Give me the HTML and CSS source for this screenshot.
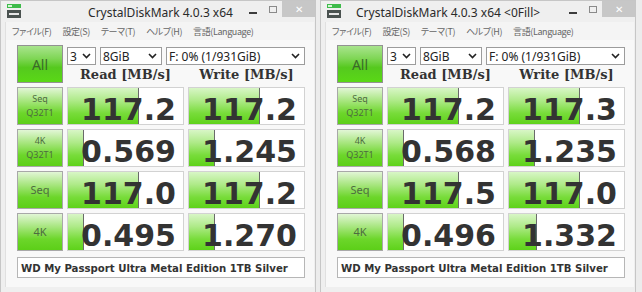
FILE: index.html
```html
<!DOCTYPE html>
<html lang="ja">
<head>
  <meta charset="UTF-8">
  <meta name="viewport" content="width=device-width, initial-scale=1.0">
  <title>CrystalDiskMark 4.0.3 x64</title>
  <link rel="stylesheet" href="styles.css">
</head>
<body>

  <div class="desk">

    <!-- left window: random data -->
    <div class="window">
      <div class="titlebar">
        <svg class="app-icon" width="14" height="14" viewBox="0 0 14 14">
          <rect x="0" y="0" width="14" height="4" fill="#3dbb4a"/>
          <rect x="1" y="1" width="4" height="2" fill="#d6f4d6"/>
          <rect x="0" y="6" width="14" height="8" fill="#4a5250"/>
          <rect x="2" y="9" width="10" height="2" fill="#e6e6e6"/>
        </svg>
        <div class="title">CrystalDiskMark 4.0.3 x64</div>
        <div class="controls">
          <span class="ctl-min"></span>
          <span class="ctl-max"></span>
          <span class="ctl-close">✕</span>
        </div>
      </div>

      <div class="client">
        <div class="menu">
          <span>ファイル(F)</span>
          <span>設定(S)</span>
          <span>テーマ(T)</span>
          <span>ヘルプ(H)</span>
          <span>言語(Language)</span>
        </div>

        <div class="panel">
          <div class="btn btn-all">All</div>
          <div class="top">
            <div class="selects">
              <div class="sel sel-count"><span>3</span><svg width="9" height="6" viewBox="0 0 9 6"><path d="M1 1l3.5 3.5L8 1" fill="none" stroke="#222" stroke-width="1.6"/></svg></div>
              <div class="sel sel-size"><span>8GiB</span><svg width="9" height="6" viewBox="0 0 9 6"><path d="M1 1l3.5 3.5L8 1" fill="none" stroke="#222" stroke-width="1.6"/></svg></div>
              <div class="sel sel-drive"><span>F: 0% (1/931GiB)</span><svg width="9" height="6" viewBox="0 0 9 6"><path d="M1 1l3.5 3.5L8 1" fill="none" stroke="#222" stroke-width="1.6"/></svg></div>
            </div>
            <div class="heads">
              <div>Read [MB/s]</div>
              <div>Write [MB/s]</div>
            </div>
          </div>

          <div class="btn btn-label">Seq<br>Q32T1</div>
          <div class="cell"><div class="bar" style="width: 70px"></div><div class="num">117.2</div></div>
          <div class="cell"><div class="bar" style="width: 70px"></div><div class="num">117.2</div></div>

          <div class="btn btn-label">4K<br>Q32T1</div>
          <div class="cell"><div class="bar" style="width: 15px"></div><div class="num">0.569</div></div>
          <div class="cell"><div class="bar" style="width: 25px"></div><div class="num">1.245</div></div>

          <div class="btn btn-label big">Seq</div>
          <div class="cell"><div class="bar" style="width: 70px"></div><div class="num">117.0</div></div>
          <div class="cell"><div class="bar" style="width: 70px"></div><div class="num">117.2</div></div>

          <div class="btn btn-label big">4K</div>
          <div class="cell"><div class="bar" style="width: 15px"></div><div class="num">0.495</div></div>
          <div class="cell"><div class="bar" style="width: 25px"></div><div class="num">1.270</div></div>

          <div class="comment">WD My Passport Ultra Metal Edition 1TB Silver</div>
        </div>
      </div>
    </div>

    <!-- right window: 0Fill data -->
    <div class="window">
      <div class="titlebar">
        <svg class="app-icon" width="14" height="14" viewBox="0 0 14 14">
          <rect x="0" y="0" width="14" height="4" fill="#3dbb4a"/>
          <rect x="1" y="1" width="4" height="2" fill="#d6f4d6"/>
          <rect x="0" y="6" width="14" height="8" fill="#4a5250"/>
          <rect x="2" y="9" width="10" height="2" fill="#e6e6e6"/>
        </svg>
        <div class="title title-wide">CrystalDiskMark 4.0.3 x64 &lt;0Fill&gt;</div>
        <div class="controls">
          <span class="ctl-min"></span>
          <span class="ctl-max"></span>
          <span class="ctl-close">✕</span>
        </div>
      </div>

      <div class="client">
        <div class="menu">
          <span>ファイル(F)</span>
          <span>設定(S)</span>
          <span>テーマ(T)</span>
          <span>ヘルプ(H)</span>
          <span>言語(Language)</span>
        </div>

        <div class="panel">
          <div class="btn btn-all">All</div>
          <div class="top">
            <div class="selects">
              <div class="sel sel-count"><span>3</span><svg width="9" height="6" viewBox="0 0 9 6"><path d="M1 1l3.5 3.5L8 1" fill="none" stroke="#222" stroke-width="1.6"/></svg></div>
              <div class="sel sel-size"><span>8GiB</span><svg width="9" height="6" viewBox="0 0 9 6"><path d="M1 1l3.5 3.5L8 1" fill="none" stroke="#222" stroke-width="1.6"/></svg></div>
              <div class="sel sel-drive"><span>F: 0% (1/931GiB)</span><svg width="9" height="6" viewBox="0 0 9 6"><path d="M1 1l3.5 3.5L8 1" fill="none" stroke="#222" stroke-width="1.6"/></svg></div>
            </div>
            <div class="heads">
              <div>Read [MB/s]</div>
              <div>Write [MB/s]</div>
            </div>
          </div>

          <div class="btn btn-label">Seq<br>Q32T1</div>
          <div class="cell"><div class="bar" style="width: 70px"></div><div class="num">117.2</div></div>
          <div class="cell"><div class="bar" style="width: 70px"></div><div class="num">117.3</div></div>

          <div class="btn btn-label">4K<br>Q32T1</div>
          <div class="cell"><div class="bar" style="width: 15px"></div><div class="num">0.568</div></div>
          <div class="cell"><div class="bar" style="width: 25px"></div><div class="num">1.235</div></div>

          <div class="btn btn-label big">Seq</div>
          <div class="cell"><div class="bar" style="width: 70px"></div><div class="num">117.5</div></div>
          <div class="cell"><div class="bar" style="width: 70px"></div><div class="num">117.0</div></div>

          <div class="btn btn-label big">4K</div>
          <div class="cell"><div class="bar" style="width: 15px"></div><div class="num">0.496</div></div>
          <div class="cell"><div class="bar" style="width: 27px"></div><div class="num">1.332</div></div>

          <div class="comment">WD My Passport Ultra Metal Edition 1TB Silver</div>
        </div>
      </div>
    </div>

  </div>

</body>
</html>
```

FILE: styles.css
```css
body {
  margin: 0;
  background-color: #ececec;
  font-family: 'Noto Sans', sans-serif;
  color: #333;
}

.desk {
  display: flex;
  gap: 4px;
  width: 642px;
  height: 292px;
}

.window {
  box-sizing: border-box;
  width: 316px;
  height: 292px;
  display: flex;
  flex-direction: column;
  background-color: #efefef;
  border: 1px solid #c6c6c6;
  border-bottom: none;
}

/* title bar */

.titlebar {
  display: flex;
  align-items: flex-start;
  height: 21px;
  flex-shrink: 0;
}

.app-icon {
  margin: 3px 0 0 6px;
  flex-shrink: 0;
}

.title {
  flex: 1;
  text-align: center;
  padding-left: 51px;
  font-size: 12px;
  line-height: 24px;
  color: #2a2a2a;
  white-space: nowrap;
}

.title-wide {
  text-align: left;
  padding-left: 15px;
}

.controls {
  display: flex;
  align-items: flex-start;
  flex-shrink: 0;
}

.ctl-min {
  width: 8px;
  height: 2px;
  margin: 11px 12px 0 0;
  background-color: #3c3c3c;
}

.ctl-max {
  width: 6px;
  height: 5px;
  margin: 5px 5px 0 0;
  border: 1px solid #8a8a8a;
}

.ctl-close {
  width: 33px;
  height: 16px;
  background-color: #c7c7c7;
  color: #fff;
  font-size: 10px;
  line-height: 16px;
  text-align: center;
}

/* client area */

.client {
  flex: 1;
  display: flex;
  flex-direction: column;
  margin: 0 1px 5px 4px;
  background-color: #f8f8f8;
  border-left: 1px solid #e0e0e0;
}

.menu {
  display: flex;
  gap: 11px;
  height: 18px;
  padding-left: 6px;
  font-family: 'Noto Sans CJK JP', sans-serif;
  font-feature-settings: "palt";
  font-size: 9px;
  letter-spacing: -0.4px;
  line-height: 20px;
  color: #666;
  background-color: #f4f4f4;
  white-space: nowrap;
}

.panel {
  display: grid;
  grid-template-columns: 46px 117px 117px;
  grid-template-rows: repeat(5, 38px) 23px;
  column-gap: 4px;
  row-gap: 4px;
  padding: 5px 0 0 11px;
}

.btn {
  box-sizing: border-box;
  border: 1px solid #a8a8a8;
  display: flex;
  align-items: center;
  justify-content: center;
  text-align: center;
}

.btn-all {
  background: linear-gradient(to bottom, #a9e48e 0%, #7fd655 35%, #55c91e 60%, #5ad816 100%);
  border-color: #929292;
  color: #3b6a2a;
  font-size: 14px;
}

.btn-label {
  background: linear-gradient(to bottom, #e2f6d6 0%, #a8e680 35%, #6cd62a 70%, #5ccf18 100%);
  color: #4d6b40;
  font-size: 9px;
  line-height: 14px;
}

.btn-label.big {
  font-size: 11px;
}

.top {
  grid-column: 2 / 4;
  display: flex;
  flex-direction: column;
}

.selects {
  display: flex;
  gap: 4px;
  margin-top: 2px;
}

.sel {
  box-sizing: border-box;
  height: 18px;
  display: flex;
  align-items: center;
  justify-content: space-between;
  padding: 0 4px 0 2px;
  background-color: #fff;
  border: 1px solid #9c9c9c;
  font-size: 12px;
  color: #222;
  white-space: nowrap;
}

.sel-count {
  width: 29px;
}

.sel-size {
  width: 62px;
}

.sel-drive {
  flex: 1;
}

.heads {
  display: grid;
  grid-template-columns: 117px 117px;
  column-gap: 4px;
  margin-top: 2px;
  font-family: 'DejaVu Serif', serif;
  font-weight: bold;
  font-size: 13px;
  line-height: 16px;
  text-align: center;
  color: #333;
}

/* result cells */

.cell {
  box-sizing: border-box;
  display: grid;
  grid-template-areas: "cell";
  background-color: #fff;
  border: 1px solid #d2d2d2;
}

.bar {
  grid-area: cell;
  justify-self: start;
  background: linear-gradient(to bottom, #d8f6c6 0%, #aeea88 35%, #78dc3a 70%, #5ed21a 100%);
  border-right: 1px solid #6a6a6a;
}

.num {
  grid-area: cell;
  text-align: right;
  padding: 7px 7px 0 0;
  font-family: 'DejaVu Sans', sans-serif;
  font-weight: bold;
  font-size: 30px;
  line-height: 29px;
  color: #333;
}

.comment {
  grid-column: 1 / 4;
  box-sizing: border-box;
  margin-top: 2px;
  padding-left: 3px;
  background-color: #fff;
  border: 1px solid #b6b6b6;
  font-family: 'DejaVu Sans', sans-serif;
  font-stretch: condensed;
  font-weight: bold;
  font-size: 11.3px;
  line-height: 21px;
  color: #333;
  white-space: nowrap;
}
```
